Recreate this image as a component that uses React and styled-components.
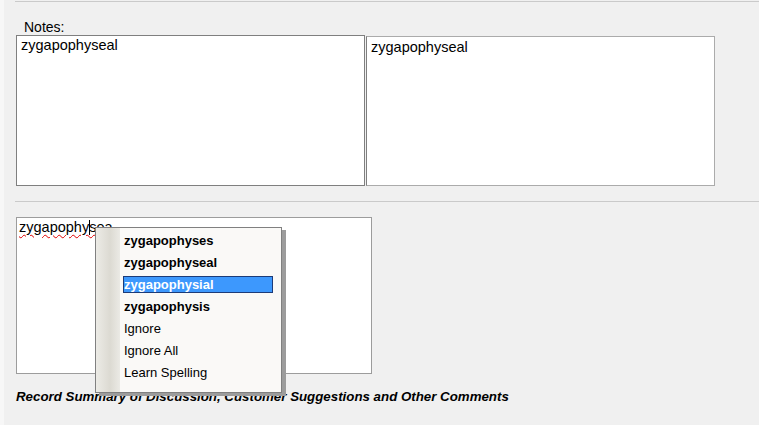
import React from 'react';
import styled, { createGlobalStyle } from 'styled-components';

const GlobalStyle = createGlobalStyle`
    html, body {
        margin: 0;
        padding: 0;
        background: #f0f0f0;
    }
    body {
        font-family: "Liberation Sans", Arial, sans-serif;
        color: #000;
    }
`

const Page = styled.div`
    width: 759px;
    height: 425px;
    overflow: hidden;
    box-sizing: border-box;
    background: #f0f0f0;
    border-left: 4px solid #f7f7f7;
    padding-left: 11px;
    padding-top: 1px;
`

const Rule = styled.div`
    height: 1px;
    background: #cacaca;
    margin-top: ${props => props.gap || 0}px;
`

const Label = styled.div`
    font-size: 14px;
    line-height: 16px;
    margin-top: 17px;
    padding-left: 9px;
`

const BoxRow = styled.div`
    display: flex;
    align-items: flex-end;
    padding-left: 1px;
    gap: 1px;
`

const TextBox = styled.div`
    box-sizing: border-box;
    width: ${props => props.w}px;
    height: ${props => props.h}px;
    background: #fff;
    border: 1px solid ${props => props.edge || '#8a8a8a'};
    border-left-color: ${props => props.leftEdge || props.edge || '#8a8a8a'};
    font-size: 14.5px;
    line-height: 17px;
    padding: ${props => props.pad || '0 4px'};
    white-space: nowrap;
`

const EditArea = styled.div`
    position: relative;
    margin-top: 15px;
    margin-left: 1px;
    width: 356px;
`

const Misspelled = styled.span`
    text-decoration: underline wavy #e00000;
    text-decoration-thickness: 1px;
    text-underline-offset: 2px;
`

const Caret = styled.span`
    display: inline-block;
    width: 1px;
    height: 15px;
    background: #000;
    vertical-align: -3px;
    margin: 0 -0.5px;
`

const Menu = styled.div`
    position: absolute;
    left: 79px;
    top: 10px;
    width: 187px;
    height: 166px;
    box-sizing: border-box;
    border: 1px solid #808080;
    background: linear-gradient(90deg, #ecebe6 0px, #dcdad2 14px, #ebeae5 24px, #faf9f7 24px);
    box-shadow: 4px 3px 0 0 #9c9c9c;
    padding: 1px 8px 0 27px;
    display: flex;
    flex-direction: column;
    font-size: 13px;
`

const MenuItem = styled.div`
    height: 22px;
    display: flex;
    align-items: center;
`

const ItemLabel = styled.span`
    box-sizing: border-box;
    width: 150px;
    height: 17px;
    line-height: 15px;
    padding-left: 0;
    font-weight: ${props => props.bold ? 700 : 400};
    color: ${props => props.active ? '#fff' : '#000'};
    background: ${props => props.active ? '#3d98fd' : 'transparent'};
    border: 1px solid ${props => props.active ? '#1c3b78' : 'transparent'};
`

const Caption = styled.div`
    margin-top: 15px;
    margin-left: 1px;
    font-size: 13.3px;
    line-height: 16px;
    font-weight: 700;
    font-style: italic;
`

const suggestions = ['zygapophyses', 'zygapophyseal', 'zygapophysial', 'zygapophysis'];
const actions = ['Ignore', 'Ignore All', 'Learn Spelling'];

const App = () => {
    const active = 'zygapophysial';

    return (
        <Page>
            <GlobalStyle />
            <Rule />
            <Label>Notes:</Label>
            <BoxRow>
                <TextBox w={349} h={151} edge="#7f7f7f" pad="1px 4px">zygapophyseal</TextBox>
                <TextBox w={349} h={150} edge="#ababab" leftEdge="#7f7f7f" pad="2px 4px">zygapophyseal</TextBox>
            </BoxRow>
            <Rule gap={15} />
            <EditArea>
                <TextBox w={356} h={157} edge="#9c9c9c" pad="1px 2px">
                    <Misspelled>zygapophy<Caret />sea</Misspelled>
                </TextBox>
                <Menu>
                    {suggestions.map(word => (
                        <MenuItem key={word}>
                            <ItemLabel bold active={word === active}>{word}</ItemLabel>
                        </MenuItem>
                    ))}
                    {actions.map(action => (
                        <MenuItem key={action}>
                            <ItemLabel>{action}</ItemLabel>
                        </MenuItem>
                    ))}
                </Menu>
            </EditArea>
            <Caption>Record Summary of Discussion, Customer Suggestions and Other Comments</Caption>
        </Page>
    );
}

export default App;
